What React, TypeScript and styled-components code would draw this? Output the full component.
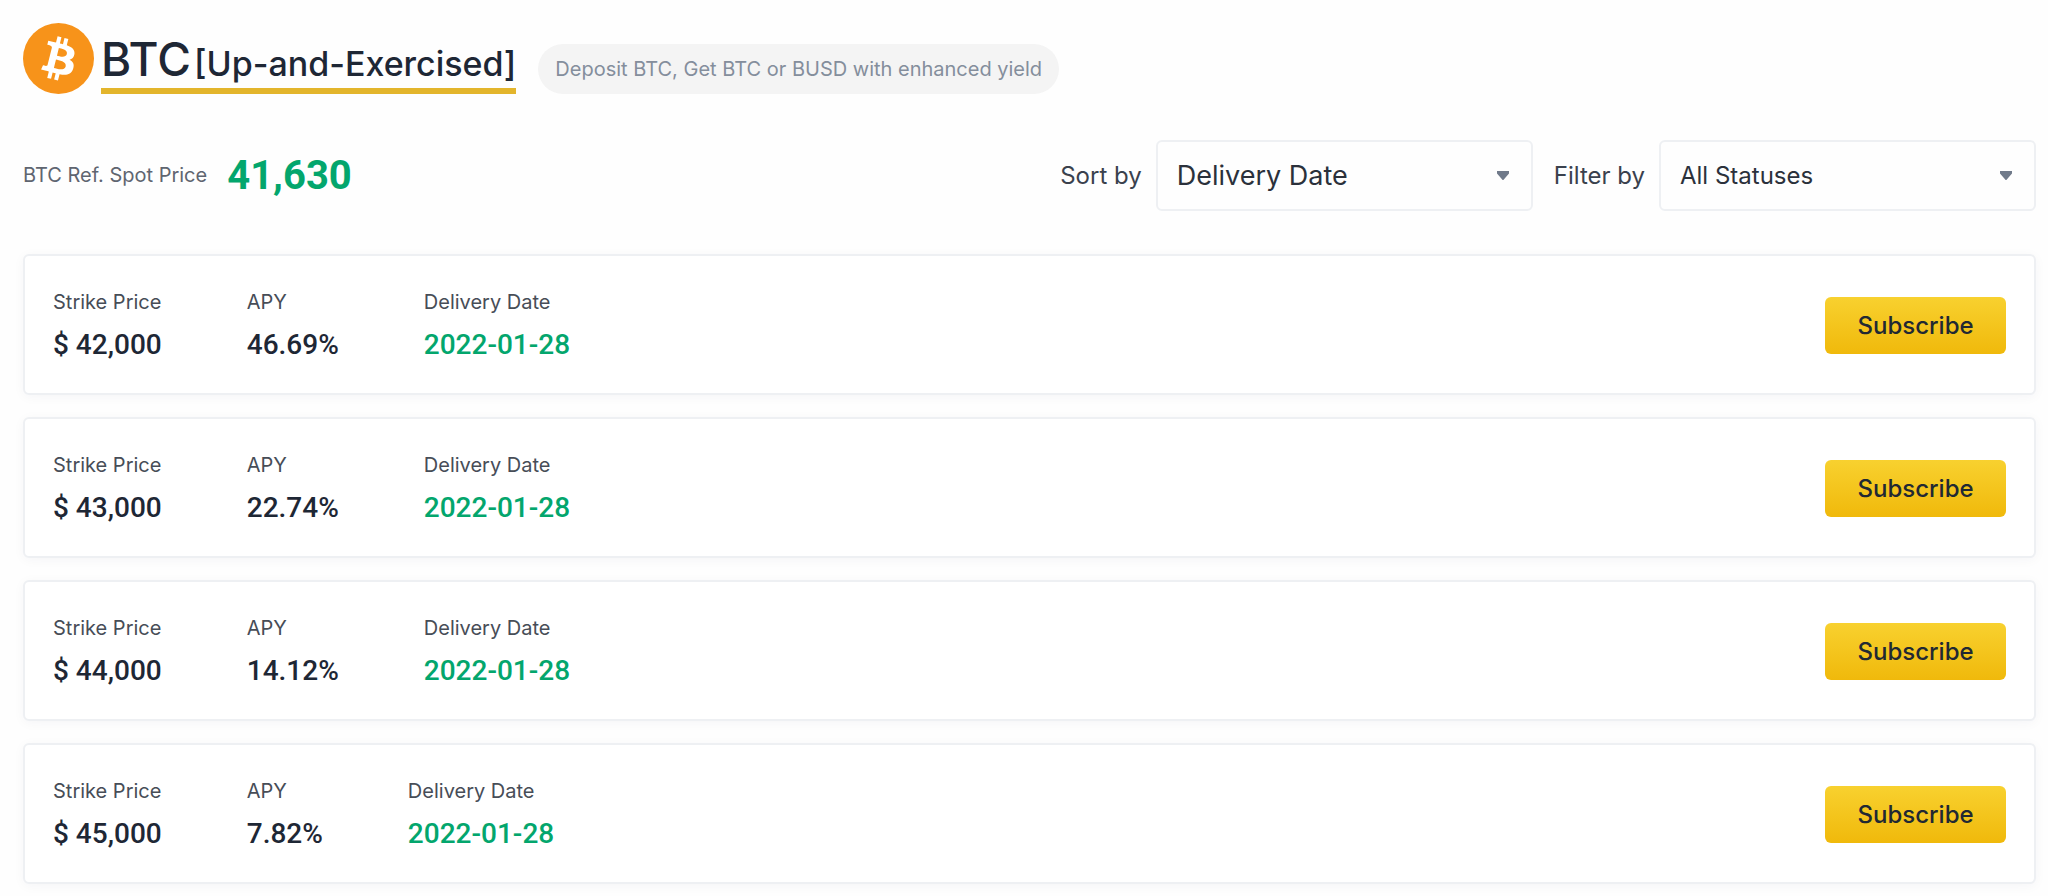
import React from "react";
import styled, { createGlobalStyle, css } from "styled-components";

const color = {
  page: "#fefefe",
  ink: "#1e2735",
  label: "#474d57",
  muted: "#848e9c",
  green: "#03a66d",
  line: "#eef0f3",
  gold: "#e3b52c",
  bitcoin: "#f7931a",
};

const GlobalStyle = createGlobalStyle`
  *, *::before, *::after { box-sizing: border-box; }
  body {
    margin: 0;
    background: ${color.page};
    color: ${color.ink};
    font-family: Inter, "Liberation Sans", sans-serif;
    font-size: 20px;
    line-height: 25px;
  }
`;

const figures = css`
  font-family: Roboto, "Liberation Sans", sans-serif;
`;

const Page = styled.main`
  padding: 23px 12px 12px 23px;
`;

const Header = styled.header`
  display: flex;
  flex-wrap: wrap;
  align-items: flex-end;
  gap: 12px 22px;
`;

const Brand = styled.div`
  display: flex;
  align-items: flex-end;
  gap: 7px;
`;

const CoinLogo = styled.svg`
  display: block;
  width: 71px;
  height: 71px;
`;

const Title = styled.h1`
  display: flex;
  align-items: baseline;
  gap: 3px;
  margin: 0;
  border-bottom: 6px solid ${color.gold};
  font-size: 46px;
  font-weight: 500;
  line-height: 48px;
`;

const Product = styled.span`
  font-size: 34px;
`;

const Tag = styled.p`
  margin: 0;
  padding: 13px 17px 12px;
  border-radius: 25px;
  background: #f4f4f4;
  color: ${color.muted};
`;

const Toolbar = styled.div`
  display: flex;
  flex-wrap: wrap;
  align-items: center;
  justify-content: space-between;
  gap: 16px;
  margin: 46px 0 43px;
`;

const SpotPrice = styled.div`
  display: flex;
  align-items: center;
  gap: 20px;
  color: #5f6570;
`;

const SpotValue = styled.strong`
  ${figures}
  color: ${color.green};
  font-size: 40px;
  font-weight: 700;
  line-height: 48px;
`;

const Filters = styled.div`
  display: flex;
  flex-wrap: wrap;
  gap: 16px 21px;
`;

const Field = styled.div`
  display: flex;
  align-items: center;
  gap: 14px;
`;

const FieldLabel = styled.label`
  color: #3a414d;
  font-size: 24px;
`;

const SelectBox = styled.div`
  position: relative;
  width: 377px;
`;

const Select = styled.select<{ $large?: boolean }>`
  appearance: none;
  display: block;
  width: 100%;
  height: 71px;
  padding: 0 52px 0 19px;
  border: 2px solid ${color.line};
  border-radius: 6px;
  background: transparent;
  color: #2b313b;
  font-family: inherit;
  font-size: ${(p) => (p.$large ? 27 : 24)}px;
`;

const Caret = styled.svg`
  position: absolute;
  top: 31px;
  right: 24px;
  width: 12px;
  height: 9px;
  fill: #707a8a;
  pointer-events: none;
`;

const OfferList = styled.ul`
  display: flex;
  flex-direction: column;
  gap: 22px;
  margin: 0;
  padding: 0;
  list-style: none;
`;

const OfferCard = styled.li`
  display: flex;
  align-items: center;
  justify-content: space-between;
  gap: 24px;
  padding: 34px 28px 33px;
  border: 2px solid ${color.line};
  border-radius: 6px;
  background: #fff;
  box-shadow: 0 2px 12px rgba(24, 32, 80, 0.04);
`;

const Facts = styled.dl`
  display: flex;
  flex-wrap: wrap;
  gap: 16px 85px;
  margin: 0;
`;

const Fact = styled.div`
  display: flex;
  flex-direction: column;
  gap: 15px;
`;

const FactName = styled.dt`
  color: ${color.label};
`;

const FactValue = styled.dd<{ $green?: boolean }>`
  ${figures}
  margin: 0;
  color: ${(p) => (p.$green ? color.green : color.ink)};
  font-size: 28px;
  font-weight: 500;
  line-height: 30px;
`;

const SubscribeButton = styled.button`
  flex: none;
  width: 181px;
  height: 57px;
  padding: 0;
  border: 0;
  border-radius: 6px;
  background: linear-gradient(#f8d12f, #f0b90b);
  color: #212833;
  font-family: inherit;
  font-size: 24px;
  font-weight: 500;
  cursor: pointer;
`;

const offers = [
  { strike: "$ 42,000", apy: "46.69%", date: "2022-01-28" },
  { strike: "$ 43,000", apy: "22.74%", date: "2022-01-28" },
  { strike: "$ 44,000", apy: "14.12%", date: "2022-01-28" },
  { strike: "$ 45,000", apy: "7.82%", date: "2022-01-28" },
];

function Bitcoin() {
  return (
    <CoinLogo viewBox="0 0 32 32" aria-hidden="true">
      <circle cx="16" cy="16" r="16" fill={color.bitcoin} />
      <path
        fill="#fff"
        d="M23.189 14.02c.314-2.096-1.283-3.223-3.465-3.975l.708-2.84-1.728-.43-.69 2.765c-.454-.114-.92-.22-1.385-.326l.695-2.783L15.596 6l-.708 2.839c-.376-.086-.746-.17-1.104-.26l.002-.009-2.384-.595-.46 1.846s1.283.294 1.256.312c.7.175.826.638.805 1.006l-.806 3.235c.048.012.11.03.18.057l-.183-.045-1.13 4.532c-.086.212-.303.531-.793.41.018.025-1.256-.313-1.256-.313l-.858 1.978 2.25.561c.418.105.828.215 1.231.318l-.715 2.872 1.727.43.708-2.84c.472.127.93.245 1.378.357l-.706 2.828 1.728.43.715-2.866c2.948.558 5.164.333 6.097-2.333.752-2.146-.037-3.385-1.588-4.192 1.13-.26 1.98-1.003 2.207-2.538zm-3.95 5.538c-.533 2.147-4.148.986-5.32.695l.95-3.805c1.172.293 4.929.872 4.37 3.11zm.535-5.569c-.487 1.953-3.495.96-4.47.717l.86-3.45c.975.243 4.118.696 3.61 2.733z"
      />
    </CoinLogo>
  );
}

function Dropdown(props: { id: string; label: string; options: string[]; large?: boolean }) {
  return (
    <Field>
      <FieldLabel htmlFor={props.id}>{props.label}</FieldLabel>
      <SelectBox>
        <Select id={props.id} $large={props.large}>
          {props.options.map((option) => (
            <option key={option}>{option}</option>
          ))}
        </Select>
        <Caret viewBox="0 0 12 9" aria-hidden="true">
          <path d="M0 0h12v2.5L6.8 8.6a1 1 0 0 1-1.6 0L0 2.5z" />
        </Caret>
      </SelectBox>
    </Field>
  );
}

export default function App() {
  return (
    <>
      <GlobalStyle />
      <Page>
        <Header>
          <Brand>
            <Bitcoin />
            <Title>
              BTC <Product>[Up-and-Exercised]</Product>
            </Title>
          </Brand>
          <Tag>Deposit BTC, Get BTC or BUSD with enhanced yield</Tag>
        </Header>

        <Toolbar>
          <SpotPrice>
            <span>BTC Ref. Spot Price</span>
            <SpotValue>41,630</SpotValue>
          </SpotPrice>
          <Filters>
            <Dropdown id="sort" label="Sort by" options={["Delivery Date"]} large />
            <Dropdown id="status" label="Filter by" options={["All Statuses"]} />
          </Filters>
        </Toolbar>

        <OfferList>
          {offers.map((offer) => (
            <OfferCard key={offer.strike}>
              <Facts>
                <Fact>
                  <FactName>Strike Price</FactName>
                  <FactValue>{offer.strike}</FactValue>
                </Fact>
                <Fact>
                  <FactName>APY</FactName>
                  <FactValue>{offer.apy}</FactValue>
                </Fact>
                <Fact>
                  <FactName>Delivery Date</FactName>
                  <FactValue $green>{offer.date}</FactValue>
                </Fact>
              </Facts>
              <SubscribeButton type="button">Subscribe</SubscribeButton>
            </OfferCard>
          ))}
        </OfferList>
      </Page>
    </>
  );
}
